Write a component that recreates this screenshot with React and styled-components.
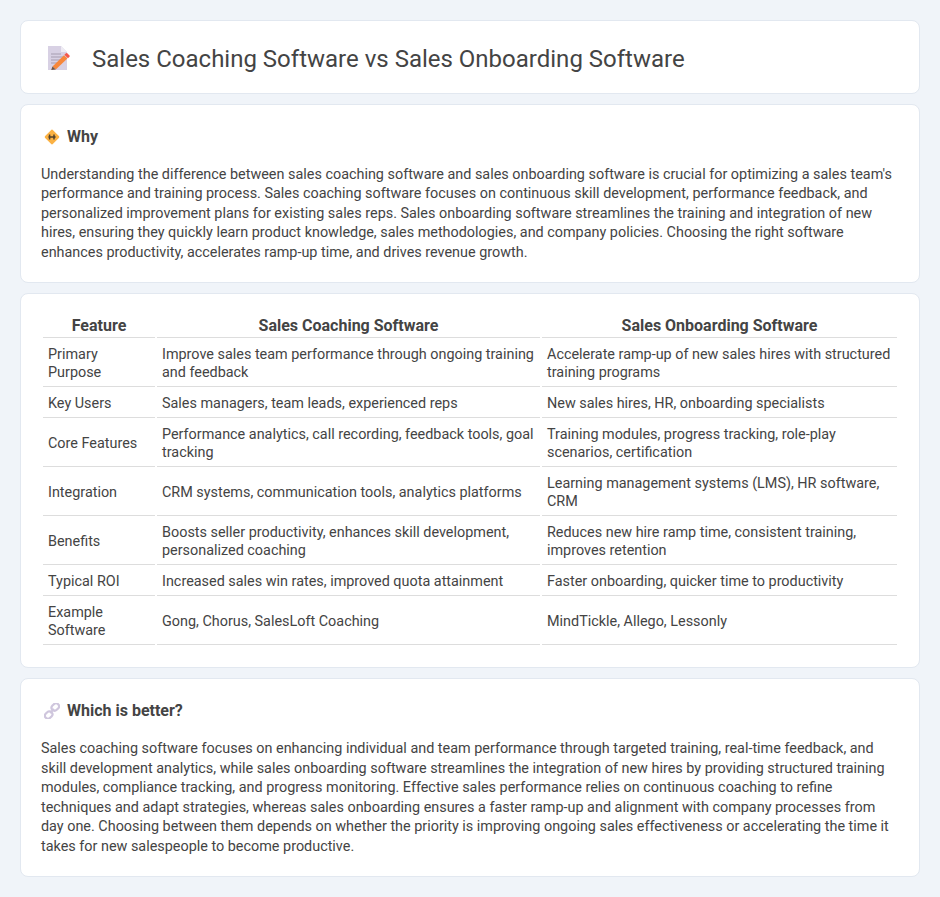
import React from "react";
import styled, { createGlobalStyle } from "styled-components";

const Global = createGlobalStyle`
  html, body { margin: 0; padding: 0; }
  body { background: #f0f4f9; font-family: Roboto, "Liberation Sans", sans-serif; color: #444; }
`;
const Page = styled.main`
  display: flex; flex-direction: column; gap: 10px; padding: 20px; box-sizing: border-box; width: 940px;
`;
const Card = styled.section`
  background: #fff; border: 1px solid #e2e8f0; border-radius: 8px; padding: 21px 20px 19px;
`;
const TableCard = styled(Card)`
  padding: 20.4px 20px 20px;
`;
const Header = styled.header`
  display: flex; align-items: center; gap: 12px; height: 73.6px; padding: 4px 20px 0; box-sizing: border-box;
  background: #fff; border: 1px solid #e2e8f0; border-radius: 8px;
`;
const IconBox = styled.span`
  display: flex; align-items: center; justify-content: flex-start; width: 39px; height: 38px; padding: 0 0 2px 7px; box-sizing: border-box; flex: none;
`;
const Title = styled.h1`
  margin: 0; font-size: 24px; font-weight: 400; color: #444; line-height: 32px;
`;
const SectionHead = styled.div`
  display: flex; align-items: center; gap: 7px; margin-bottom: 17px; height: 22px; padding-left: 3px;
`;
const SectionTitle = styled.h2`
  margin: 0; font-size: 16px; font-weight: 700; color: #444; line-height: 22px;
`;
const Body = styled.p`
  margin: 0; font-size: 14.4px; line-height: 19.6px; color: #444;
`;
const Table = styled.table`
  width: 100%; table-layout: fixed; border-collapse: separate; border-spacing: 2px; font-size: 14.4px; line-height: 18px; color: #444;
`;
const FeatureCol = styled.col` width: 112px; `;
const CoachCol = styled.col` width: 383px; `;
const OnboardCol = styled.col``;
const Th = styled.th`
  font-size: 16px; font-weight: 700; line-height: 18px; padding: 1px 0 2px; border-bottom: 1px solid #ddd; text-align: center;
`;
const Td = styled.td`
  padding: 6px 5px 4px; border-bottom: 1px solid #ddd; text-align: left; vertical-align: middle;
`;

const DocIcon = () => (
  <svg width="22" height="24" viewBox="0 0 22 24">
    <path d="M0 0h13l6 6v18H0z" fill="#d8d1e4" />
    <path d="M13 0l6 6h-6z" fill="#eeebf3" />
    <path d="M3 8h10M3 11h12M3 14h9M3 17h6" stroke="#a59eb0" strokeWidth="1.1" fill="none" />
    <path d="M4.5 20.5L16 9.2l3.4 3.4L7.8 23.6z" fill="#f7873b" />
    <path d="M16.4 8.8l1.6-1.6a1 1 0 0 1 1.3 0l2.2 2.2a1 1 0 0 1 0 1.3l-1.6 1.6z" fill="#f4574b" />
    <path d="M4.5 20.5l3.3 3.1-4.6.4z" fill="#6e5646" />
  </svg>
);
const SignIcon = () => (
  <svg width="16" height="16" viewBox="0 0 16 16">
    <rect x="2.4" y="2.4" width="11.2" height="11.2" rx="1.5" transform="rotate(45 8 8)" fill="#fbb244" />
    <path d="M5.6 5.6v4.8M10 5.6v4.8M4.4 8h7.2" stroke="#50402c" strokeWidth="1.5" fill="none" />
  </svg>
);
const LinkIcon = () => (
  <svg width="16" height="16" viewBox="0 0 16 16" fill="none" stroke="#cfc6dd" strokeWidth="2.2">
    <rect x="7.3" y="1" width="8" height="6" rx="3" transform="rotate(-45 11.3 4)" />
    <rect x="0.7" y="9" width="8" height="6" rx="3" transform="rotate(-45 4.7 12)" />
    <path d="M6 10l4-4" />
  </svg>
);

const rows = [
  ["Primary Purpose", "Improve sales team performance through ongoing training and feedback", "Accelerate ramp-up of new sales hires with structured training programs"],
  ["Key Users", "Sales managers, team leads, experienced reps", "New sales hires, HR, onboarding specialists"],
  ["Core Features", "Performance analytics, call recording, feedback tools, goal tracking", "Training modules, progress tracking, role-play scenarios, certification"],
  ["Integration", "CRM systems, communication tools, analytics platforms", "Learning management systems (LMS), HR software, CRM"],
  ["Benefits", "Boosts seller productivity, enhances skill development, personalized coaching", "Reduces new hire ramp time, consistent training, improves retention"],
  ["Typical ROI", "Increased sales win rates, improved quota attainment", "Faster onboarding, quicker time to productivity"],
  ["Example Software", "Gong, Chorus, SalesLoft Coaching", "MindTickle, Allego, Lessonly"],
];

export default function App() {
  return (
    <>
      <Global />
      <Page>
        <Header>
          <IconBox><DocIcon /></IconBox>
          <Title>Sales Coaching Software vs Sales Onboarding Software</Title>
        </Header>
        <Card>
          <SectionHead><SignIcon /><SectionTitle>Why</SectionTitle></SectionHead>
          <Body>Understanding the difference between sales coaching software and sales onboarding software is crucial for optimizing a sales team's performance and training process. Sales coaching software focuses on continuous skill development, performance feedback, and personalized improvement plans for existing sales reps. Sales onboarding software streamlines the training and integration of new hires, ensuring they quickly learn product knowledge, sales methodologies, and company policies. Choosing the right software enhances productivity, accelerates ramp-up time, and drives revenue growth.</Body>
        </Card>
        <TableCard>
          <Table>
            <colgroup>
              <FeatureCol />
              <CoachCol />
              <OnboardCol />
            </colgroup>
            <thead>
              <tr><Th>Feature</Th><Th>Sales Coaching Software</Th><Th>Sales Onboarding Software</Th></tr>
            </thead>
            <tbody>
              {rows.map(r => (
                <tr key={r[0]}><Td>{r[0]}</Td><Td>{r[1]}</Td><Td>{r[2]}</Td></tr>
              ))}
            </tbody>
          </Table>
        </TableCard>
        <Card>
          <SectionHead><LinkIcon /><SectionTitle>Which is better?</SectionTitle></SectionHead>
          <Body>Sales coaching software focuses on enhancing individual and team performance through targeted training, real-time feedback, and skill development analytics, while sales onboarding software streamlines the integration of new hires by providing structured training modules, compliance tracking, and progress monitoring. Effective sales performance relies on continuous coaching to refine techniques and adapt strategies, whereas sales onboarding ensures a faster ramp-up and alignment with company processes from day one. Choosing between them depends on whether the priority is improving ongoing sales effectiveness or accelerating the time it takes for new salespeople to become productive.</Body>
        </Card>
      </Page>
    </>
  );
}
